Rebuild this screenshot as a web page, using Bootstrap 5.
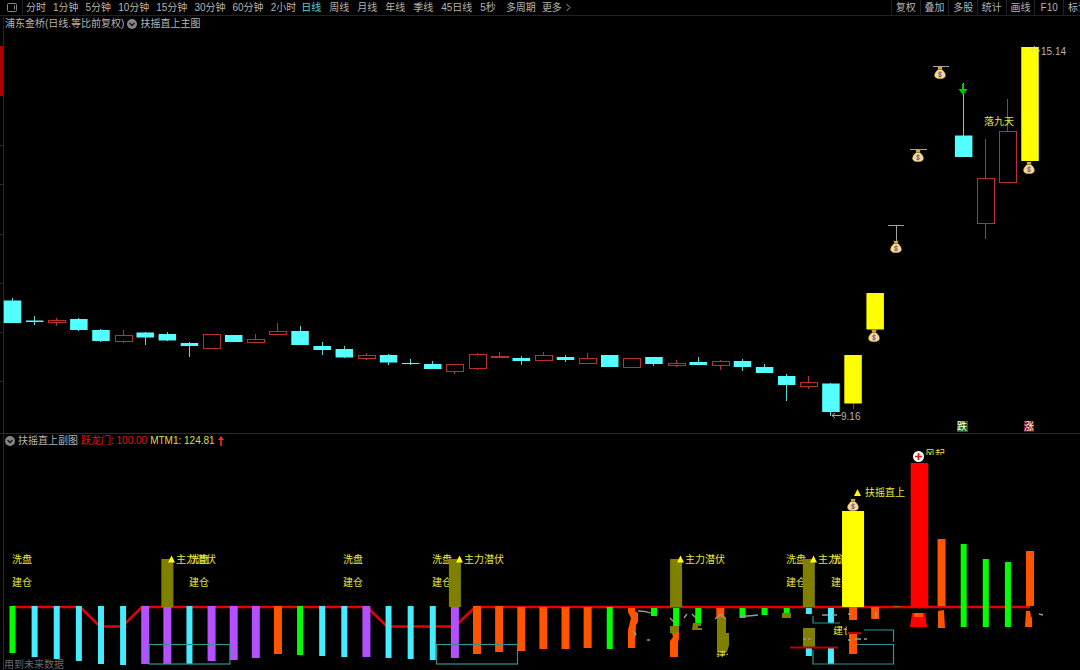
<!DOCTYPE html>
<html lang="zh-CN">
<head>
<meta charset="utf-8">
<meta name="viewport" content="width=device-width, initial-scale=1">
<title>浦东金桥 日线</title>
<link href="https://cdn.jsdelivr.net/npm/bootstrap@5.3.0/dist/css/bootstrap.min.css" rel="stylesheet">
<style>
  body { background: #000; color: #b4b4b4; font-family: "Liberation Sans", "Noto Sans CJK SC", sans-serif; font-size: 10px; line-height: 14px; overflow-x: hidden; }
  .topbar { height: 16px; border-bottom: 1px solid #222; }
  .topbar button { background: none; border: 0; padding: 0; color: inherit; line-height: 14px; white-space: nowrap; }
  .topbar .active { color: #5fd0d6; }
  .topbar .side-toggle { width: 23px; border-right: 1px solid #222; padding-left: 2px; }
  .periods { gap: 5px; margin-left: 3px; }
  .g-min { gap: 7px; }
  .g-day { gap: 8px; }
  .g-more { gap: 6px; padding-left: 5px; }
  .tools { flex: 0 0 189px; display: grid; grid-template-columns: repeat(6, 1fr) 17px; overflow: hidden; }
  .topbar .tools button { border-left: 1px solid #222; }
  .topbar .tools button:last-child { padding-left: 4px; text-align: left; }
  .chart-title { margin-left: 3px; border-left: 1px solid #222; padding-left: 1px; gap: 3px; white-space: nowrap; }
  .chart-title.main-title { height: 16px; }
  .chart-title.sub-title { height: 14px; }
  .sub-panel { border-top: 1px solid #2a2a2a; }
  .plot { display: block; width: 100%; height: auto; }
  .plot text { font-size: 10px; fill: #e6e63c; }
  .plot .price { fill: #b4b4b4; }
  .plot .note { fill: #6a6a6a; }
  .plot .tag-text { fill: #fff; }
  .t-red { color: #e01818; }
  .t-yellow { color: #dede3a; }
</style>
</head>
<body>
<header class="topbar d-flex justify-content-between">
  <div class="d-flex flex-shrink-0">
    <button type="button" class="side-toggle d-flex align-items-center justify-content-center" aria-label="侧栏">
      <svg width="12" height="10" viewBox="0 0 12 10" fill="none" stroke="#888"><rect x="1.5" y=".5" width="9" height="8" rx="1"/><path d="M8.500 2.500v4"/></svg>
    </button>
    <nav class="periods d-flex" aria-label="周期">
      <div class="g-min d-flex">
        <button type="button">分时</button><button type="button">1分钟</button><button type="button">5分钟</button><button type="button">10分钟</button><button type="button">15分钟</button><button type="button">30分钟</button><button type="button">60分钟</button><button type="button">2小时</button>
      </div>
      <div class="g-day d-flex">
        <button type="button" class="active">日线</button><button type="button">周线</button><button type="button">月线</button><button type="button">年线</button><button type="button">季线</button><button type="button">45日线</button><button type="button">5秒</button>
      </div>
      <div class="g-more d-flex">
        <button type="button">多周期</button>
        <button type="button" class="d-flex align-items-center">更多<svg class="ms-1" width="5" height="9" viewBox="0 0 5 9" fill="none" stroke="#aaa"><path d="M.5 1 4 4.500 .5 8"/></svg></button>
      </div>
    </nav>
  </div>
  <div class="tools">
    <button type="button">复权</button><button type="button">叠加</button><button type="button">多股</button><button type="button">统计</button><button type="button">画线</button><button type="button">F10</button><button type="button">标记</button>
  </div>
</header>

<main>
  <section>
    <div class="chart-title main-title d-flex align-items-center">
      <span>浦东金桥(日线.等比前复权)</span>
      <svg width="10" height="10" viewBox="0 0 10 10"><circle cx="5" cy="5" r="5" fill="#858585"/><path d="M2.500 4 5 6.500 7.500 4" fill="none" stroke="#111" stroke-width="1.300"/></svg>
      <span>扶摇直上主图</span>
    </div>
    <svg class="plot" viewBox="0 32 1080 401" role="img" aria-label="K线主图">
      <defs>
        <symbol id="bag" viewBox="0 0 12 13">
          <path d="M3.500 .5 5 1.200 6 .4 7 1.200 8.500 .5 7.800 3.500H4.200z" fill="#d9ae3c"/>
          <path d="M4.500 3.300C2.500 5 .6 7 .6 9.300c0 2.400 1.800 3.400 5.400 3.400s5.400-1 5.400-3.400C11.400 7 9.500 5 7.500 3.300z" fill="#f5e08c" stroke="#c9a035" stroke-width=".5"/>
          <path d="M4.200 3.500h3.600" stroke="#a06a20" stroke-width=".8"/>
          <circle cx="6" cy="8.400" r="3.100" fill="#e9cfc8"/>
          <path d="M7.800 6.800C6.800 5.800 4.500 6 4.500 7.300S7.700 8.300 7.600 9.600 5 10.900 4.200 9.800M6 5.500v5.900" fill="none" stroke="#7d4a4a" stroke-width=".8"/>
        </symbol>
      </defs>
      <path d="M3.500 32V433M0 145.500h3M0 184.500h3M0 234.500h3M0 283.500h3M0 332.500h3M0 381.500h3" stroke="#2a2a2a"/>
      <rect x="0" y="46" width="3" height="50" fill="#b00000"/>
      <g id="candles"></g>
      <path d="M888 225.500h16M896.500 226v15M910 149.500h17M933 66.500h16" stroke="#a0a0a0"/>
      <use href="#bag" x="868" y="329" width="12" height="13"/>
      <use href="#bag" x="890" y="240" width="12" height="13"/>
      <use href="#bag" x="912" y="149" width="12" height="13"/>
      <use href="#bag" x="934" y="66" width="12" height="13"/>
      <use href="#bag" x="1023" y="161" width="12" height="13"/>
      <path d="M962 84h2v5h3.500l-4.500 6-4.500-6h3.500z" fill="#00c800"/>
      <text x="984" y="125">落九天</text>
      <path d="M1031 48.500l9 2.500M1031 48.500l4-2M1031 48.500l2 3.500" stroke="#d8d8a0" fill="none"/>
      <text class="price" x="1041" y="55">15.14</text>
      <path d="M832 415.500h9M835 413l-3 2.500 3 2.500" stroke="#aaa" fill="none"/>
      <text class="price" x="841" y="420">9.16</text>
      <rect x="957" y="421" width="11" height="11" fill="#0a6a1c"/>
      <text class="tag-text" x="957" y="430">跌</text>
      <rect x="1024" y="421" width="10" height="11" fill="#7c0814"/>
      <text class="tag-text" x="1024" y="430">涨</text>
    </svg>
  </section>

  <section class="sub-panel">
    <div class="chart-title sub-title d-flex align-items-center">
      <svg width="10" height="10" viewBox="0 0 10 10"><circle cx="5" cy="5" r="5" fill="#858585"/><path d="M2.500 4 5 6.500 7.500 4" fill="none" stroke="#111" stroke-width="1.300"/></svg>
      <span>扶摇直上副图</span>
      <span class="t-red">跃龙门: 100.00</span>
      <span class="t-yellow">MTM1: 124.81</span>
      <svg width="6" height="11" viewBox="0 0 6 11"><path d="M3 0 6 4H3.800v6H2.200V4H0z" fill="#ff2a2a"/></svg>
    </div>
    <svg class="plot" viewBox="0 448 1080 222" role="img" aria-label="副图指标">
      <defs>
        <clipPath id="cut-low"><rect x="716" y="651" width="12" height="6"/></clipPath>
        <clipPath id="cut-mid"><rect x="832" y="626" width="15" height="9"/></clipPath>
        <clipPath id="cut-top"><rect x="924" y="449" width="24" height="6"/></clipPath>
      </defs>
      <path d="M3.500 448V670" stroke="#2a2a2a"/>
      <text class="note" x="4" y="668">用到未来数据</text>
      <path d="M12 607H80L100 626.500H122L142 607H367L387 626.500H455L475 607H1030" fill="none" stroke="#e60000" stroke-width="2.500"/>
      <g>
        <text x="12" y="563">洗盘</text><text x="12" y="586">建仓</text>
        <text x="189" y="563">洗盘</text><text x="189" y="586">建仓</text>
        <text x="343" y="563">洗盘</text><text x="343" y="586">建仓</text>
        <text x="432" y="563">洗盘</text><text x="432" y="586">建仓</text>
        <text x="786" y="563">洗盘</text><text x="786" y="586">建仓</text>
        <text x="831" y="563">洗盘</text><text x="831" y="586">建仓</text>
        <text x="818" y="563">主力潜伏</text>
      </g>
      <g id="bars"></g>
      <g fill="none" stroke="#2f9494" stroke-width="1.200">
        <rect x="149" y="644.500" width="81" height="19.500"/>
        <rect x="436.500" y="644.500" width="81" height="19.500"/>
        <path d="M813 616v7h27M813 650v14h80.500v-19.500H857M864 630h29.500v12"/>
      </g>
      <path d="M168 562.500l3.500-7 3.500 7zM456 562.500l3.500-7 3.500 7zM677 562.500l3.500-7 3.500 7zM810 562.500l3.500-7 3.500 7zM854 496l3.500-7 3.500 7z" fill="#ff0"/>
      <text x="176" y="563">主力潜伏</text>
      <text x="464" y="563">主力潜伏</text>
      <text x="685" y="563">主力潜伏</text>
      <text x="865" y="496">扶摇直上</text>
      <text x="925" y="458" clip-path="url(#cut-top)">风起</text>
      <use href="#bag" x="847" y="498" width="12" height="13"/>
      <circle cx="918.500" cy="456.500" r="5.500" fill="#fff"/>
      <path d="M918.500 453v7M915 456.500h7" stroke="#e01020" stroke-width="1.700"/>

      <!-- broken fragments below the zero line -->
      <path d="M628 608h7v3l3 2v9l-2 3-1 23h-7v-18l3-12-3-6z" fill="#ff5500"/>
      <path d="M672 633l7-2v7l-1 5v14h-8v-16l3-4z" fill="#ff5500"/>
      <path d="M670 626h9v5l-4 3-5-1zM693 623h8v3h-3v2h4v2h-10zM717 618h9v15h3v12l-2 7h-10zM782 613h9v5h-9zM803 628h12v19h-12z" fill="#808000"/>
      <path d="M638 611q7 0 13 2M633 631l3 3-2 2M647 640h3M670 618l4 4M684 618l3-4M692 614l4 4M715 619l6-5 5 5M740 616h8l10-1M803 639h3M808 639h3M822 615h6M833 615h4M848 614h3M848 640h3M855 639h6M864 639h3M876 612v6M1039 614l4 1" fill="none" stroke="#999" stroke-width="1.300"/>
      <text x="716" y="659" clip-path="url(#cut-low)">建仓</text>
      <text x="833" y="634" clip-path="url(#cut-mid)">建仓</text>
      <path d="M790 647.500h48M848 633h13" stroke="#b80000" stroke-width="2"/>
      <path d="M912 613h13l2 14h-17z" fill="#f00"/>
      <path d="M914 613h9v4h-9zM938 611l6-1 1 18h-7zM1026 611h4l1 5 1 2v9h-7z" fill="#ff5500"/>
      <path d="M893 606.500h7" stroke="#a06000"/>
    </svg>
  </section>
</main>

<script>
  const NS = 'http://www.w3.org/2000/svg';
  const xAt = i => 12.5 + 22.12 * i;
  function box(parent, x, y, w, h, fill, stroke) {
    const r = document.createElementNS(NS, 'rect');
    const a = { x, y, width: w, height: h, fill };
    if (stroke) a.stroke = stroke;
    for (const k in a) r.setAttribute(k, a[k]);
    parent.appendChild(r);
  }

  // [slot, kind, high, body top, body bottom, low]; c falling, r rising, y limit-up
  const candles = [
    [0,'c',298,300.5,323,323],[1,'c',316,320.5,322,325],[2,'r',318,320.5,322.5,326],[3,'c',318,319,330,331],
    [4,'c',329,330,341,342],[5,'r',330,335.5,341.5,343],[6,'c',332,332.5,337.5,345],[7,'c',332,334,340.5,341],
    [8,'c',342,343,346,357],[9,'r',334,334.5,348.5,349],[10,'c',335,335,342,342],[11,'r',334,339.5,342.5,343],
    [12,'r',323,331.5,334.5,335],[13,'c',326,331,345,345],[14,'c',342,346,350,355],[15,'c',346,349,357.5,358],
    [16,'r',353,355.5,358.5,360],[17,'c',354,355,362.5,365],[18,'c',359,363,364,365],[19,'c',361,364,369,369],
    [20,'r',364,364.5,371.5,374],[21,'r',353,354.5,368.5,370],[22,'r',352,356.5,357.5,358],[23,'c',356,358,361,365],
    [24,'r',352,355.5,360.5,361],[25,'c',355,357,360,362],[26,'r',353,358.5,363.5,364],[27,'c',355,355,367,367],
    [28,'r',358,358.5,367.5,368],[29,'c',357,357,364,366],[30,'r',360,363.5,365.5,367],[31,'c',357,362,365,365],
    [32,'r',360,361.5,365.5,370],[33,'c',359,361,367,371],[34,'c',364,367,373,373],[35,'c',374,376,385,401],
    [36,'r',376,382.5,386.5,389],[37,'c',383,383.5,412,416],[38,'y',355,355,403.5,409],[39,'y',293,293,329.5,329.5],
    [43,'c',83,135.5,157,157],[44,'r',139,178.5,223.5,239],[45,'r',99,131.5,182.5,182.5],[46,'y',47,47,161,161]
  ];
  const cg = document.getElementById('candles');
  for (const [i, k, hi, top, bot, lo] of candles) {
    const x = Math.floor(xAt(i)) + .5;
    if (k === 'r') {
      box(cg, x - .5, hi, 1, top - hi, '#b83232');
      box(cg, x - .5, bot, 1, lo - bot, '#b83232');
      box(cg, x - 8, top, 17, bot - top, '#000', '#b83232');
    } else {
      box(cg, x - .5, hi, 1, lo - hi, k === 'y' ? '#b83232' : '#54d8d8');
      box(cg, xAt(i) - 8.75, top, 17.5, bot - top, k === 'y' ? '#ff0' : '#54ffff');
    }
  }

  // [slot, colour, top, bottom]
  const tones = { g: ['#00ff00', 6], c: ['#46ebff', 6], p: ['#b450ff', 8], o: ['#ff5500', 8], v: ['#808000', 12], y: ['#ffff00', 22], r: ['#ff0000', 17.5] };
  const bars = [
    [0,'g',606,653],[1,'c',606,657],[2,'c',606,659],[3,'c',606,661],[4,'c',606,664],[5,'c',606,665],
    [6,'p',606,664],[7,'p',606,664],[8,'c',606,664],[9,'p',606,661],[10,'p',606,660],[11,'p',606,658],
    [12,'o',606,654],[13,'g',606,655],[14,'c',606,656],[15,'c',606,657],[16,'p',606,657],[17,'c',606,658],
    [18,'c',606,659],[19,'c',606,660],[20,'p',606,658],[21,'o',606,654],[22,'o',606,652],[23,'o',607,651],
    [24,'o',607,649],[25,'o',607,649],[26,'o',607,648],[27,'g',607,649],[29,'g',608,616],[30,'g',608,627],
    [31,'g',608,624],[32,'o',608,618],[33,'g',608,618],[34,'g',608,615],[35,'g',608,613],
    [36,'c',608,614],[36,'c',648,656],[37,'c',608,623],[37,'c',647,664],[38,'o',607,620],[38,'o',633,654],
    [39,'o',607,619],[7,'v',559,607],[20,'v',559,607],[30,'v',559,607],[36,'v',559,607],[38,'y',511,607],
    [41,'r',463,607],[42,'o',539,606],[43,'g',544,627],[44,'g',559,627],[45,'g',562,627],[46,'o',551,606]
  ];
  const bg = document.getElementById('bars');
  for (const [i, k, top, bot] of bars) {
    const [fill, w] = tones[k];
    box(bg, xAt(i) - w / 2, top, w, bot - top, fill);
  }
</script>
<script src="https://cdn.jsdelivr.net/npm/bootstrap@5.3.0/dist/js/bootstrap.bundle.min.js"></script>
</body>
</html>
